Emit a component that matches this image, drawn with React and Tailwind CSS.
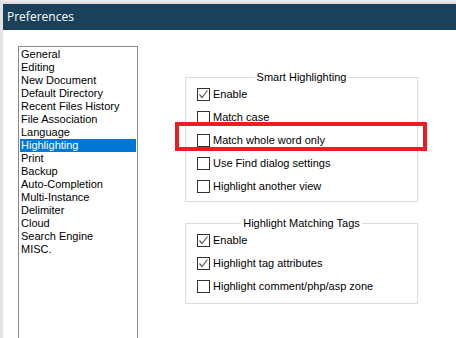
import React from 'react';

const pages = [
  'General',
  'Editing',
  'New Document',
  'Default Directory',
  'Recent Files History',
  'File Association',
  'Language',
  'Highlighting',
  'Print',
  'Backup',
  'Auto-Completion',
  'Multi-Instance',
  'Delimiter',
  'Cloud',
  'Search Engine',
  'MISC.',
];

const smartOptions = [
  { label: 'Enable', checked: true },
  { label: 'Match case', checked: false },
  { label: 'Match whole word only', checked: false },
  { label: 'Use Find dialog settings', checked: false },
  { label: 'Highlight another view', checked: false },
];

const tagOptions = [
  { label: 'Enable', checked: true },
  { label: 'Highlight tag attributes', checked: true },
  { label: 'Highlight comment/php/asp zone', checked: false },
];

const Checkbox = ({ label, checked }) => (
  <div className="flex items-center h-[13px]">
    <span className="w-[13px] h-[13px] border border-[#333333] bg-white flex items-center justify-center shrink-0">
      {checked && (
        <svg width="11" height="11" viewBox="0 0 11 11">
          <polyline points="1.5,5.5 4,8.5 9.5,1.5" fill="none" stroke="#5a5a5a" strokeWidth="1.2" />
        </svg>
      )}
    </span>
    <span className="ml-[3px] text-[11px] leading-[13px] text-black">{label}</span>
  </div>
);

const GroupBox = ({ title, options, className }) => (
  <div className={`relative border border-[#dcdcdc] w-[233px] pl-[11px] shrink-0 ${className}`}>
    <div className="absolute -top-[7px] left-0 right-0 flex justify-center">
      <span className="bg-white px-[2px] text-[11px] leading-[13px] text-black">{title}</span>
    </div>
    <div className="flex flex-col gap-[10px]">
      {options.map((o) => (
        <Checkbox key={o.label} {...o} />
      ))}
    </div>
  </div>
);

export default function App() {
  return (
    <div
      className="relative w-[456px] h-[338px] overflow-hidden bg-white border-l-[3px] border-[#e3e3e3] flex flex-col"
      style={{ fontFamily: '"Liberation Sans", Arial, sans-serif' }}
    >
      <div className="h-[4px] shrink-0 bg-gradient-to-b from-[#f2f2f2] to-[#d6d6d6]" />
      <div className="h-[26px] shrink-0 bg-[#1a4159] flex items-center pl-[4px]">
        <span className="text-white text-[12px]" style={{ fontFamily: '"Open Sans", "Noto Sans", sans-serif' }}>
          Preferences
        </span>
      </div>

      <div className="flex shrink-0 pt-[16px] pl-[15px]">
        {/* Page list */}
        <div className="w-[120px] h-[320px] border border-[#828790] p-[1px] shrink-0">
          {pages.map((p) => (
            <div
              key={p}
              className={`h-[13px] pl-[1px] text-[11px] leading-[13px] whitespace-nowrap ${
                p === 'Highlighting' ? 'bg-[#0078d7] text-white' : 'text-black'
              }`}
            >
              {p}
            </div>
          ))}
        </div>

        {/* Settings */}
        <div className="ml-[47px] pt-[31px] flex flex-col">
          <GroupBox title="Smart Highlighting" options={smartOptions} className="h-[125px] pt-[10px]" />
          <GroupBox title="Highlight Matching Tags" options={tagOptions} className="mt-[21px] h-[81px] pt-[10px]" />
        </div>
      </div>

      {/* Annotation */}
      <div className="absolute left-[172px] top-[122px] w-[252px] h-[29px] border-[4px] border-[#ed1c24]" />
    </div>
  );
}
